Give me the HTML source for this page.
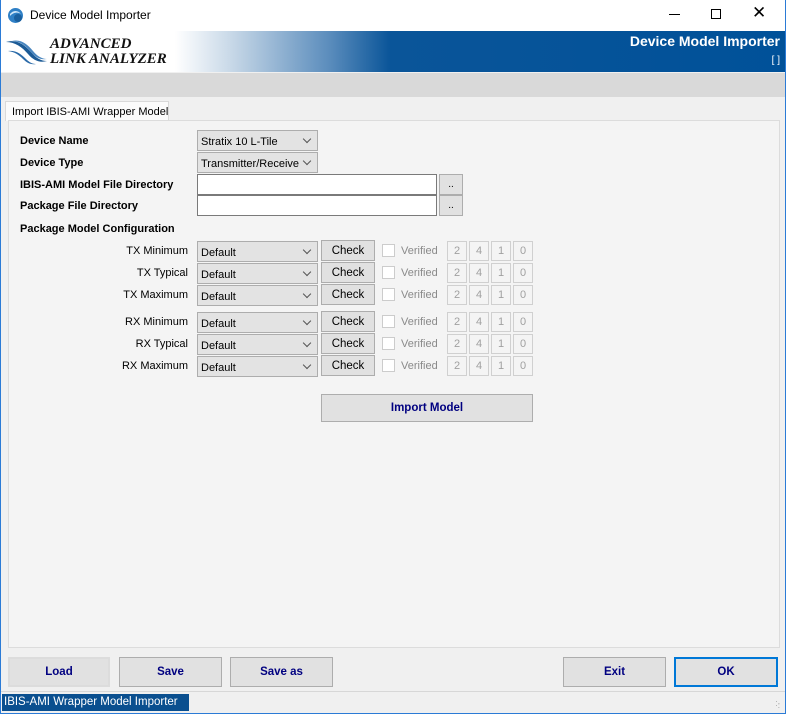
<!DOCTYPE html>
<html><head><style>
*{box-sizing:border-box;margin:0;padding:0}
body{width:786px;height:714px;position:relative;background:#f0f0f0;font-family:"Liberation Sans",sans-serif;font-size:11px;overflow:hidden}
.a{position:absolute;white-space:nowrap}
.title{left:0;top:0;width:786px;height:31px;background:#fff}
.banner{left:0;top:31px;width:786px;height:41px;background:linear-gradient(90deg,#fff 0,#fff 175px,#c9d9e8 230px,#5a8cbc 330px,#0a5599 390px,#005199 786px)}
.lbl{font-weight:bold;font-size:11px;color:#000}
.combo{background:#e3e3e3;border:1px solid #adadad;font-size:11px;padding:5px 0 0 3px;height:21px}
.combo:after{content:"";position:absolute;right:7px;top:5px;width:5px;height:5px;border-right:1px solid #555;border-bottom:1px solid #555;transform:rotate(45deg)}
.btn{background:#e1e1e1;border:1px solid #adadad;text-align:center;font-size:11.5px}
.bb{font-weight:bold;color:#000080;font-size:11.5px;line-height:28px}
.inp{background:#fff;border:1px solid #7a7a7a;height:21px}
.rl{font-size:11px;text-align:right;width:90px;left:98px}
.num{border:1px solid #d0d0d0;color:#a0a0a0;text-align:center;font-size:11px;height:20px;line-height:18px;width:20px}
</style></head><body>
<div class="a title"></div>
<svg class="a" style="left:7px;top:7px" width="17" height="17"><circle cx="8.5" cy="8.5" r="7.5" fill="#2f80c6"/><path d="M3 7c3-4 8-4 11 0-3-2-7-2-11 2z" fill="#cfe6f8"/><circle cx="11" cy="11" r="4" fill="#1a5f9e"/></svg>
<div class="a" style="left:30px;top:8px;font-size:12px">Device Model Importer</div>
<div class="a" style="left:669px;top:14px;width:11px;height:1px;background:#000"></div>
<div class="a" style="left:711px;top:9px;width:10px;height:10px;border:1px solid #000"></div>
<div class="a" style="left:752px;top:4px;font-size:17px;line-height:17px">✕</div>
<div class="a banner"></div>
<svg class="a" style="left:6px;top:38px" width="42" height="28"><path d="M0 4c10-3 18 2 25 10 5 6 10 9 16 9-7 2-13 0-19-7C16 9 9 4 0 4z" fill="#1c5b96"/><path d="M6 3c9-2 15 3 21 10 4 5 9 8 14 8-6 1-11-1-16-7C20 8 14 3 6 3z" fill="#4a86bf"/><path d="M2 13c8-1 13 3 18 8 3 3 6 5 10 5-5 1-9-1-13-5-4-4-8-7-15-8z" fill="#2a6aa8"/></svg>
<div class="a" style="left:50px;top:37px;font-family:'Liberation Serif',serif;font-style:italic;font-weight:bold;font-size:15px;line-height:15px;color:#111">ADVANCED<br>LINK ANALYZER</div>
<div class="a" style="right:6px;top:33px;color:#fff;font-weight:bold;font-size:14px">Device Model Importer</div>
<div class="a" style="right:6px;top:55px;color:#fff;font-size:10px">[ ]</div>
<div class="a" style="left:0;top:73px;width:786px;height:24px;background:#d9d9d9"></div>
<div class="a" style="left:5px;top:101px;width:164px;height:20px;background:#fbfbfb;border:1px solid #d9d9d9;border-bottom:none;font-size:11px;padding:4px 0 0 6px">Import IBIS-AMI Wrapper Model</div>
<div class="a" style="left:8px;top:120px;width:772px;height:528px;background:#f4f4f4;border:1px solid #dcdcdc"></div>
<div class="a lbl" style="left:20px;top:135px">Device Name</div>
<div class="a lbl" style="left:20px;top:157px">Device Type</div>
<div class="a lbl" style="left:20px;top:179px">IBIS-AMI Model File Directory</div>
<div class="a lbl" style="left:20px;top:200px">Package File Directory</div>
<div class="a lbl" style="left:20px;top:223px">Package Model Configuration</div>
<div class="a combo" style="left:197px;top:130px;width:121px">Stratix 10 L-Tile</div>
<div class="a combo" style="left:197px;top:152px;width:121px">Transmitter/Receive</div>
<div class="a inp" style="left:197px;top:174px;width:240px"></div>
<div class="a btn" style="left:439px;top:174px;width:24px;height:21px;line-height:20px;font-size:10px">..</div>
<div class="a inp" style="left:197px;top:195px;width:240px"></div>
<div class="a btn" style="left:439px;top:195px;width:24px;height:21px;line-height:20px;font-size:10px">..</div>

<div id="rows"></div>
<script>
var rows=[["TX Minimum",240],["TX Typical",262],["TX Maximum",284],["RX Minimum",311],["RX Typical",333],["RX Maximum",355]];
var h="";
rows.forEach(function(r){var y=r[1];
h+='<div class="a rl" style="top:'+(y+5)+'px">'+r[0]+'</div>';
h+='<div class="a combo" style="left:197px;top:'+(y+1)+'px;width:121px">Default</div>';
h+='<div class="a btn" style="left:321px;top:'+y+'px;width:54px;height:21px;line-height:20px">Check</div>';
h+='<div class="a" style="left:382px;top:'+(y+4)+'px;width:13px;height:13px;border:1px solid #ccc;background:#fff"></div>';
h+='<div class="a" style="left:401px;top:'+(y+5)+'px;color:#8a8a8a;font-size:11px">Verified</div>';
[447,469,491,513].forEach(function(x,i){h+='<div class="a num" style="left:'+x+'px;top:'+(y+1)+'px;line-height:19px">'+"2410"[i]+'</div>';});
});
document.getElementById("rows").innerHTML=h;
</script>
<div class="a btn bb" style="left:321px;top:394px;width:212px;height:28px;line-height:27px">Import Model</div>

<div class="a btn bb" style="left:8px;top:657px;width:102px;height:30px;border:2px solid #dcdcdc;line-height:27px">Load</div>
<div class="a btn bb" style="left:119px;top:657px;width:103px;height:30px;line-height:29px">Save</div>
<div class="a btn bb" style="left:230px;top:657px;width:103px;height:30px;line-height:29px">Save as</div>
<div class="a btn bb" style="left:563px;top:657px;width:103px;height:30px;line-height:29px">Exit</div>
<div class="a btn bb" style="left:674px;top:657px;width:104px;height:30px;border:2px solid #0078d7;line-height:27px">OK</div>
<div class="a" style="left:0;top:691px;width:786px;height:1px;background:#d7d7d7"></div>
<div class="a" style="left:2px;top:694px;width:187px;height:17px;background:#0a4f8f;color:#fff;font-size:11.5px;padding:2px 0 0 2px">IBIS-AMI Wrapper Model Importer</div>
<div class="a" style="right:6px;top:700px;color:#999;font-size:8px;line-height:4px;white-space:normal">·.<br>·:</div>
<div class="a" style="left:0;top:31px;width:1px;height:683px;background:#2b7bd6"></div>
<div class="a" style="left:785px;top:0;width:1px;height:714px;background:#2b7bd6"></div>
<div class="a" style="left:0;top:0;width:1px;height:31px;background:#2b7bd6"></div>
<div class="a" style="left:0;top:713px;width:786px;height:1px;background:#2b7bd6"></div>
</body></html>
